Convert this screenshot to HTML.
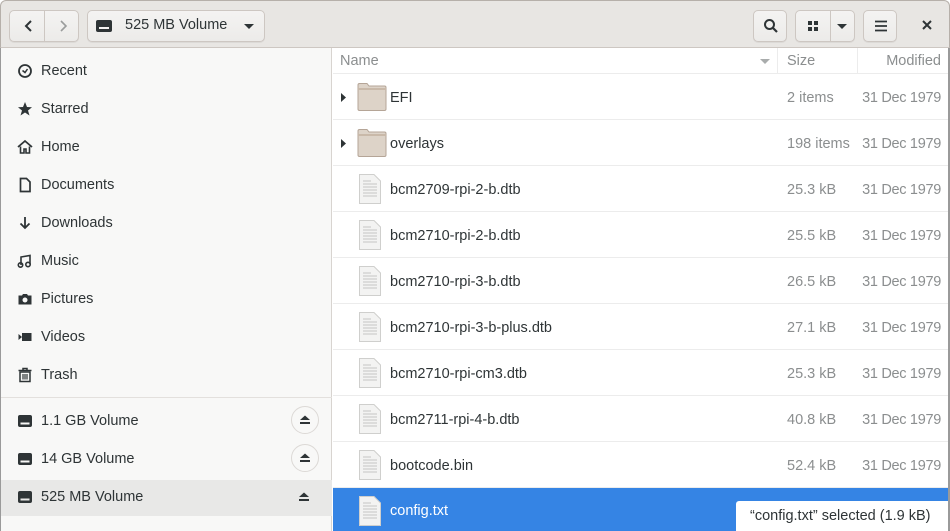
<!DOCTYPE html>
<html><head><meta charset="utf-8">
<style>
*{box-sizing:border-box;margin:0;padding:0}
body{width:950px;height:531px;overflow:hidden;font-family:"Liberation Sans",sans-serif;font-size:14px;color:#2e3436;background:#fff;position:relative}
.hdr{position:absolute;left:0;top:0;width:950px;height:48px;background:#e8e6e3;border-radius:6px 6px 0 0;border:1px solid #b6b0aa;border-bottom-color:#cdc7c2}
.btn{position:absolute;top:9px;height:32px;background:linear-gradient(#f4f3f2,#ecebe9);border:1px solid #cdc7c2;border-radius:5px;box-shadow:0 1px 0 rgba(0,0,0,.05)}
.side{position:absolute;left:0;top:48px;width:332px;height:483px;background:#f8f8f7;border-right:1px solid #d8d4d0;border-left:1px solid #9a9a9a}
.si{position:absolute;left:16px;height:20px;display:flex;align-items:center;font-size:14.5px;color:#2e3436}
.si svg{margin-right:8px}
.main{position:absolute;left:333px;top:48px;width:617px;height:483px;background:#fff}
.colh{position:absolute;top:0;height:26px;width:100%;border-bottom:1px solid #ececec;color:#8b8e8f;font-size:14.5px}
.row{position:absolute;left:0;width:616px;height:46px;border-bottom:1px solid #ececec}
.row .n{position:absolute;left:57px;top:16px;font-size:14.5px;color:#2e3436}
.row .s{position:absolute;left:454px;top:16px;color:#8b8e8f;font-size:14.5px}
.row .m{position:absolute;right:8px;top:16px;color:#8b8e8f;font-size:14.5px;letter-spacing:-.3px}
.fi{position:absolute;left:24px;top:8px}
.ej{position:absolute;left:290px;width:28px;height:28px;border:1px solid #dcd9d6;border-radius:50%;background:#f8f8f7}
.f{position:absolute;left:333px;width:615px;height:46px;border-bottom:1px solid #ececec}
.f .n{position:absolute;left:57px;top:16px;font-size:14.5px;color:#2e3436}
.f .s{position:absolute;left:454px;top:16px;color:#8b8e8f;font-size:14.5px}
.f .m{position:absolute;right:7px;top:16px;color:#8b8e8f;font-size:14.5px;letter-spacing:-.3px}
.doc{position:absolute;left:25px;top:7px}
</style></head><body>
<div class="hdr">
 <div class="btn" style="left:8px;width:70px">
  <div style="position:absolute;left:34px;top:0;width:1px;height:30px;background:#cdc7c2"></div>
  <svg style="position:absolute;left:13px;top:8px" width="12" height="14"><path d="M8 2 L3 7 L8 12" stroke="#2e3436" stroke-width="2" fill="none"/></svg>
  <svg style="position:absolute;left:47px;top:8px" width="12" height="14"><path d="M4 2 L9 7 L4 12" stroke="#9a9c9c" stroke-width="1.6" fill="none"/></svg>
 </div>
 <div class="btn" style="left:86px;width:178px">
  <div style="position:absolute;left:8px;top:9px;width:16px;height:12px;background:#2e3436;border-radius:2px"><div style="position:absolute;left:3px;top:7px;width:10px;height:2px;background:#f4f3f2"></div></div>
  <div style="position:absolute;left:37px;top:6px;font-size:14.5px;color:#2e3436">525 MB Volume</div>
  <svg style="position:absolute;left:155px;top:12px" width="12" height="8"><path d="M1 1 L11 1 L6 6Z" fill="#2e3436"/></svg>
 </div>
 <div class="btn" style="left:752px;width:34px">
  <svg style="position:absolute;left:9px;top:7px" width="16" height="16"><circle cx="6.5" cy="6.5" r="4.5" stroke="#2e3436" stroke-width="2" fill="none"/><path d="M10 10 L14 14" stroke="#2e3436" stroke-width="2.2"/></svg>
 </div>
 <div class="btn" style="left:794px;width:60px">
  <div style="position:absolute;left:34px;top:0;width:1px;height:30px;background:#cdc7c2"></div>
  <svg style="position:absolute;left:11px;top:9px" width="12" height="12"><rect x="1" y="1" width="4" height="4" fill="#2e3436"/><rect x="7" y="1" width="4" height="4" fill="#2e3436"/><rect x="1" y="7" width="4" height="4" fill="#2e3436"/><rect x="7" y="7" width="4" height="4" fill="#2e3436"/></svg>
  <svg style="position:absolute;left:40px;top:12px" width="12" height="8"><path d="M1 1 L11 1 L6 6Z" fill="#2e3436"/></svg>
 </div>
 <div class="btn" style="left:862px;width:34px">
  <svg style="position:absolute;left:10px;top:9px" width="14" height="12"><path d="M1 1.5H13M1 6H13M1 10.5H13" stroke="#2e3436" stroke-width="1.8"/></svg>
 </div>
 <svg style="position:absolute;left:921px;top:19px" width="10" height="10"><path d="M1 1L9 9M9 1L1 9" stroke="#2e3436" stroke-width="2"/></svg>
</div>

<div class="side">
 <div class="si" style="top:13px"><svg width="16" height="16"><circle cx="8" cy="8" r="6" stroke="#2e3436" stroke-width="1.8" fill="none"/><path d="M5.5 7.5 L8 9.5 L10.5 6" stroke="#2e3436" stroke-width="1.5" fill="none"/></svg>Recent</div>
 <div class="si" style="top:51px"><svg width="16" height="16"><path d="M8 1 L10 6 L15 6.2 L11 9.5 L12.5 14.5 L8 11.5 L3.5 14.5 L5 9.5 L1 6.2 L6 6Z" fill="#2e3436"/></svg>Starred</div>
 <div class="si" style="top:89px"><svg width="16" height="16"><path d="M1 8 L8 2 L15 8" stroke="#2e3436" stroke-width="1.8" fill="none"/><path d="M3.5 7.5 V14 H7 V10 H9 V14 H12.5 V7.5" stroke="#2e3436" stroke-width="1.6" fill="none"/></svg>Home</div>
 <div class="si" style="top:127px"><svg width="16" height="16"><path d="M3.5 1.5 H9.5 L13 5 V14.5 H3.5Z" stroke="#2e3436" stroke-width="1.7" fill="none"/></svg>Documents</div>
 <div class="si" style="top:165px"><svg width="16" height="16"><path d="M8 2 V13 M3.5 8.5 L8 13 L12.5 8.5" stroke="#2e3436" stroke-width="1.8" fill="none"/></svg>Downloads</div>
 <div class="si" style="top:203px"><svg width="16" height="16"><path d="M4 12 V4 L13 2.5 V11" stroke="#2e3436" stroke-width="1.6" fill="none"/><circle cx="3.5" cy="12" r="2.2" stroke="#2e3436" stroke-width="1.6" fill="none"/><circle cx="11" cy="11.5" r="2.2" stroke="#2e3436" stroke-width="1.6" fill="none"/></svg>Music</div>
 <div class="si" style="top:241px"><svg width="16" height="16"><path d="M1.5 4.5 H5 L6 3 H10 L11 4.5 H14.5 V13.5 H1.5Z" fill="#2e3436"/><circle cx="8" cy="9" r="2.5" fill="#f8f8f7"/></svg>Pictures</div>
 <div class="si" style="top:279px"><svg width="16" height="16"><path d="M1.5 5 L5 8 L1.5 11Z" fill="#2e3436"/><rect x="5" y="4" width="9.5" height="8" fill="#2e3436"/></svg>Videos</div>
 <div class="si" style="top:317px"><svg width="16" height="16"><path d="M1.5 3.5 H14.5 M6 3.5 V1.5 H10 V3.5" stroke="#2e3436" stroke-width="1.5" fill="none"/><path d="M3 5 H13 V14.5 H3Z" stroke="#2e3436" stroke-width="1.5" fill="none"/><path d="M6 7 V12.5 M8 7 V12.5 M10 7 V12.5" stroke="#2e3436" stroke-width="1.2"/></svg>Trash</div>
 <div style="position:absolute;left:0;top:349px;width:331px;height:1px;background:#e3e0dd"></div>
 <div style="position:absolute;left:0;top:432px;width:331px;height:36px;background:#e8e8e7"></div>
 <div class="si" style="top:363px"><svg width="16" height="16"><rect x="1" y="2" width="14" height="12" rx="2" fill="#2e3436"/><rect x="3.5" y="9.5" width="9" height="2" fill="#f8f8f7"/></svg>1.1 GB Volume</div>
 <div class="si" style="top:401px"><svg width="16" height="16"><rect x="1" y="2" width="14" height="12" rx="2" fill="#2e3436"/><rect x="3.5" y="9.5" width="9" height="2" fill="#f8f8f7"/></svg>14 GB Volume</div>
 <div class="si" style="top:439px"><svg width="16" height="16"><rect x="1" y="2" width="14" height="12" rx="2" fill="#2e3436"/><rect x="3.5" y="9.5" width="9" height="2" fill="#e8e8e7"/></svg>525 MB Volume</div>
 <div class="ej" style="top:358px"><svg style="position:absolute;left:7px;top:8px" width="12" height="10"><path d="M1 5 L6 0.5 L11 5Z M1 7 H11 V9 H1Z" fill="#2e3436"/></svg></div>
 <div class="ej" style="top:396px"><svg style="position:absolute;left:7px;top:8px" width="12" height="10"><path d="M1 5 L6 0.5 L11 5Z M1 7 H11 V9 H1Z" fill="#2e3436"/></svg></div>
 <svg style="position:absolute;left:297px;top:444px" width="12" height="10"><path d="M1 5 L6 0.5 L11 5Z M1 7 H11 V9 H1Z" fill="#2e3436"/></svg>
</div>

<div class="main">
 <div class="colh">
  <div style="position:absolute;left:7px;top:5px">Name</div>
  <svg style="position:absolute;left:426px;top:10px" width="12" height="8"><path d="M1 1 L11 1 L6 6Z" fill="#a9acac"/></svg>
  <div style="position:absolute;left:444px;top:0;width:1px;height:26px;background:#ececec"></div>
  <div style="position:absolute;left:454px;top:5px">Size</div>
  <div style="position:absolute;left:524px;top:0;width:1px;height:26px;background:#ececec"></div>
  <div style="position:absolute;right:9px;top:5px">Modified</div>
 </div>
 <div class="row" style="top:26px">
  <svg style="position:absolute;left:8px;top:19px" width="6" height="9"><path d="M0 0 L5 4.5 L0 9Z" fill="#2e3436"/></svg>
  <svg class="fi" width="30" height="30"><path d="M1 3 Q1 1.5 2.5 1.5 H10 L12 4 H27.5 Q29 4 29 5.5 V27 Q29 28.5 27.5 28.5 H2.5 Q1 28.5 1 27Z" fill="#ddd3c8" stroke="#b5a597"/><path d="M1 7 H29" stroke="#c9b9a9" stroke-width="2"/></svg>
  <div class="n">EFI</div><div class="s">2 items</div><div class="m">31 Dec 1979</div></div>
 <div class="row" style="top:72px">
  <svg style="position:absolute;left:8px;top:19px" width="6" height="9"><path d="M0 0 L5 4.5 L0 9Z" fill="#2e3436"/></svg>
  <svg class="fi" width="30" height="30"><path d="M1 3 Q1 1.5 2.5 1.5 H10 L12 4 H27.5 Q29 4 29 5.5 V27 Q29 28.5 27.5 28.5 H2.5 Q1 28.5 1 27Z" fill="#ddd3c8" stroke="#b5a597"/><path d="M1 7 H29" stroke="#c9b9a9" stroke-width="2"/></svg>
  <div class="n">overlays</div><div class="s">198 items</div><div class="m">31 Dec 1979</div></div>
</div>
<div class="f" style="top:166px"><svg class="doc" width="24" height="32"><path d="M1.5 1.5 H16 L22.5 8 V30.5 H1.5Z" fill="#f3f3f2" stroke="#cfcfcd"/><path d="M5 11H19M5 14H19M5 17H19M5 20H19M5 23H19M5 8H13" stroke="#c6c6c4"/></svg><div class="n">bcm2709-rpi-2-b.dtb</div><div class="s">25.3 kB</div><div class="m">31 Dec 1979</div></div>
<div class="f" style="top:212px"><svg class="doc" width="24" height="32"><path d="M1.5 1.5 H16 L22.5 8 V30.5 H1.5Z" fill="#f3f3f2" stroke="#cfcfcd"/><path d="M5 11H19M5 14H19M5 17H19M5 20H19M5 23H19M5 8H13" stroke="#c6c6c4"/></svg><div class="n">bcm2710-rpi-2-b.dtb</div><div class="s">25.5 kB</div><div class="m">31 Dec 1979</div></div>
<div class="f" style="top:258px"><svg class="doc" width="24" height="32"><path d="M1.5 1.5 H16 L22.5 8 V30.5 H1.5Z" fill="#f3f3f2" stroke="#cfcfcd"/><path d="M5 11H19M5 14H19M5 17H19M5 20H19M5 23H19M5 8H13" stroke="#c6c6c4"/></svg><div class="n">bcm2710-rpi-3-b.dtb</div><div class="s">26.5 kB</div><div class="m">31 Dec 1979</div></div>
<div class="f" style="top:304px"><svg class="doc" width="24" height="32"><path d="M1.5 1.5 H16 L22.5 8 V30.5 H1.5Z" fill="#f3f3f2" stroke="#cfcfcd"/><path d="M5 11H19M5 14H19M5 17H19M5 20H19M5 23H19M5 8H13" stroke="#c6c6c4"/></svg><div class="n">bcm2710-rpi-3-b-plus.dtb</div><div class="s">27.1 kB</div><div class="m">31 Dec 1979</div></div>
<div class="f" style="top:350px"><svg class="doc" width="24" height="32"><path d="M1.5 1.5 H16 L22.5 8 V30.5 H1.5Z" fill="#f3f3f2" stroke="#cfcfcd"/><path d="M5 11H19M5 14H19M5 17H19M5 20H19M5 23H19M5 8H13" stroke="#c6c6c4"/></svg><div class="n">bcm2710-rpi-cm3.dtb</div><div class="s">25.3 kB</div><div class="m">31 Dec 1979</div></div>
<div class="f" style="top:396px"><svg class="doc" width="24" height="32"><path d="M1.5 1.5 H16 L22.5 8 V30.5 H1.5Z" fill="#f3f3f2" stroke="#cfcfcd"/><path d="M5 11H19M5 14H19M5 17H19M5 20H19M5 23H19M5 8H13" stroke="#c6c6c4"/></svg><div class="n">bcm2711-rpi-4-b.dtb</div><div class="s">40.8 kB</div><div class="m">31 Dec 1979</div></div>
<div class="f" style="top:442px"><svg class="doc" width="24" height="32"><path d="M1.5 1.5 H16 L22.5 8 V30.5 H1.5Z" fill="#f3f3f2" stroke="#cfcfcd"/><path d="M5 11H19M5 14H19M5 17H19M5 20H19M5 23H19M5 8H13" stroke="#c6c6c4"/></svg><div class="n">bootcode.bin</div><div class="s">52.4 kB</div><div class="m">31 Dec 1979</div></div>
<div class="f" style="top:488px;background:#3584e4;border:none;height:43px"><svg class="doc" width="24" height="32"><path d="M1.5 1.5 H16 L22.5 8 V30.5 H1.5Z" fill="#f3f3f2" stroke="#cfcfcd"/><path d="M5 11H19M5 14H19M5 17H19M5 20H19M5 23H19M5 8H13" stroke="#c6c6c4"/></svg><div class="n" style="color:#fff;top:15px">config.txt</div></div>
<div style="position:absolute;left:736px;top:501px;width:212px;height:30px;background:#fff;border-top-left-radius:3px;font-size:14.5px;color:#2e3436;padding:7px 0 0 14px">“config.txt” selected  (1.9 kB)</div>
<div style="position:absolute;left:948px;top:48px;width:2px;height:483px;background:#9a9a9a"></div>
</body></html>
